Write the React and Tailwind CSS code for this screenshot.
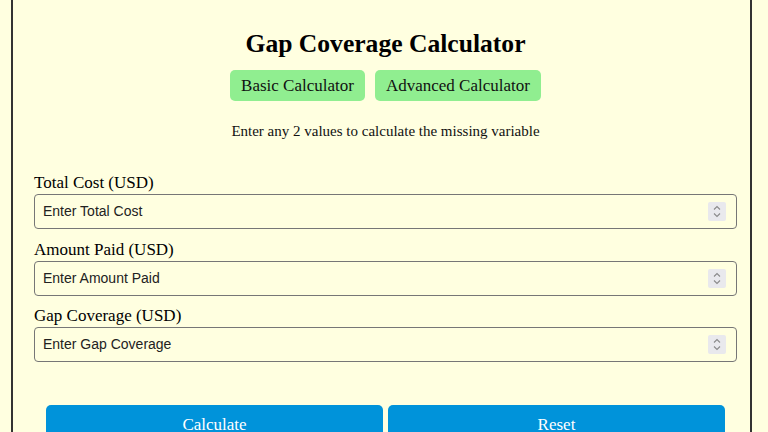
import { useState } from "react";

const fields = [
  { key: "total", label: "Total Cost (USD)", placeholder: "Enter Total Cost" },
  { key: "paid", label: "Amount Paid (USD)", placeholder: "Enter Amount Paid" },
  { key: "gap", label: "Gap Coverage (USD)", placeholder: "Enter Gap Coverage" },
];

function Spinner() {
  return (
    <span className="flex h-[19px] w-[18px] flex-col items-center justify-center gap-[3px] rounded-[2px] bg-[#e9e9ed]">
      <svg width="8" height="5" viewBox="0 0 8 5" fill="none">
        <polyline points="1,4.5 4,1.5 7,4.5" stroke="#8a8a8a" strokeWidth="1.1" />
      </svg>
      <svg width="8" height="5" viewBox="0 0 8 5" fill="none">
        <polyline points="1,0.5 4,3.5 7,0.5" stroke="#8a8a8a" strokeWidth="1.1" />
      </svg>
    </span>
  );
}

export default function App() {
  const [values, setValues] = useState({ total: "", paid: "", gap: "" });

  return (
    <div className="min-h-screen bg-[#ffffe0] pl-[11px] font-['Liberation_Serif',serif] text-black">
      <div className="min-h-[432px] w-[741px] border-x-2 border-[#333] pl-[21px] pr-[13px]">
        {/* Header */}
        <h1 className="pt-[29px] text-center text-[25.6px] font-bold leading-[30px]">
          Gap Coverage Calculator
        </h1>
        <div className="mt-[11px] flex justify-center gap-[10px]">
          <button className="rounded-[5px] bg-[#90ee90] px-[11px] py-[6px] text-[17px] leading-[19px] text-[#111]">
            Basic Calculator
          </button>
          <button className="rounded-[5px] bg-[#90ee90] px-[11px] py-[6px] text-[17px] leading-[19px] text-[#111]">
            Advanced Calculator
          </button>
        </div>
        <p className="mt-[21px] text-center text-[15px] leading-[18px] text-[#111]">
          Enter any 2 values to calculate the missing variable
        </p>

        {/* Fields */}
        <div className="mt-[33px]">
          {fields.map((f, i) => (
            <div key={f.key} className={i === 0 ? "" : i === 1 ? "mt-[11px]" : "mt-[10px]"}>
              <label className="block text-[17px] leading-[20px]">{f.label}</label>
              <div className="mt-[1px] flex h-[35px] items-center rounded-[4px] border border-[#767676] pl-[8px] pr-[10px]">
                <input
                  type="text"
                  value={values[f.key]}
                  onChange={(e) => setValues({ ...values, [f.key]: e.target.value })}
                  placeholder={f.placeholder}
                  className="min-w-0 flex-1 bg-transparent font-['Liberation_Sans',sans-serif] text-[14px] text-[#222] outline-none placeholder:text-[#222]"
                />
                <Spinner />
              </div>
            </div>
          ))}
        </div>

        {/* Actions */}
        <div className="mx-[12px] mt-[43px] flex gap-[5px]">
          <button className="h-[40px] flex-1 rounded-[5px] bg-[#0093da] text-[17px] text-white">
            Calculate
          </button>
          <button
            onClick={() => setValues({ total: "", paid: "", gap: "" })}
            className="h-[40px] flex-1 rounded-[5px] bg-[#0093da] text-[17px] text-white"
          >
            Reset
          </button>
        </div>
      </div>
    </div>
  );
}
